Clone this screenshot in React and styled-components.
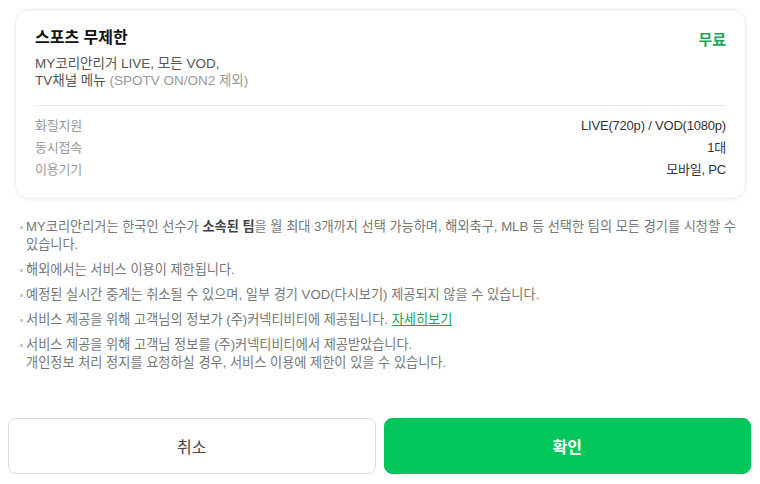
import React from "react";
import styled, { createGlobalStyle } from "styled-components";

const GlobalStyle = createGlobalStyle`
  * { box-sizing: border-box; }
  body {
    margin: 0;
    background: #fff;
    font-family: "Liberation Sans", "Noto Sans CJK KR", sans-serif;
    color: #333;
  }
`;

const Page = styled.div`
  width: 760px;
  height: 484px;
  padding: 9px 8px 0 8px;
  display: flex;
  flex-direction: column;
`;

const Card = styled.div`
  margin: 0 6px 0 7px;
  padding: 17px 19px 16px 19px;
  border: 1px solid #eeeeee;
  border-radius: 14px;
  box-shadow: 0 1px 4px rgba(0, 0, 0, 0.05);
  height: 190px;
`;

const Head = styled.div`
  display: flex;
  justify-content: space-between;
  align-items: center;
`;

const Title = styled.h2`
  margin: 0;
  font-size: 16px;
  font-weight: 700;
  color: #111;
  line-height: 22px;
`;

const Price = styled.span`
  font-size: 15px;
  font-weight: 700;
  color: #1ba65a;
`;

const Desc = styled.p`
  margin: 6px 0 0;
  font-size: 13.5px;
  line-height: 17px;
  color: #555;
`;

const Muted = styled.span`
  color: #999;
`;

const Divider = styled.hr`
  margin: 16px 0 9px;
  border: none;
  border-top: 1px solid #ebebeb;
`;

const Row = styled.div`
  display: flex;
  justify-content: space-between;
  font-size: 13px;
  line-height: 22px;
  letter-spacing: -0.2px;
`;

const Label = styled.span`
  color: #999;
`;

const Value = styled.span`
  color: #333;
`;

const Notes = styled.ul`
  list-style: none;
  margin: 19px 0 0;
  padding: 0 2px 0 18px;
  display: flex;
  flex-direction: column;
  gap: 7px;
`;

const Note = styled.li`
  position: relative;
  font-size: 13.2px;
  line-height: 18px;
  color: #777;
  &::before {
    content: "";
    position: absolute;
    left: -6px;
    top: 8px;
    width: 3px;
    height: 3px;
    background: #ccc;
  }
`;

const Strong = styled.b`
  color: #444;
  font-weight: 700;
`;

const Link = styled.a`
  color: #1ba65a;
  text-decoration: underline;
`;

const Buttons = styled.div`
  margin-top: auto;
  margin-bottom: 10px;
  display: flex;
  gap: 8px;
  padding-right: 1px;
`;

const Button = styled.button`
  flex: 1;
  height: 56px;
  border-radius: 8px;
  font-family: inherit;
  font-size: 16px;
  cursor: pointer;
  border: 1px solid ${(p) => (p.$primary ? "#03c75a" : "#dddddd")};
  background: ${(p) => (p.$primary ? "#03c75a" : "#fff")};
  color: ${(p) => (p.$primary ? "#fff" : "#444")};
  font-weight: ${(p) => (p.$primary ? 700 : 400)};
`;

const specs = [
  ["화질지원", "LIVE(720p) / VOD(1080p)"],
  ["동시접속", "1대"],
  ["이용기기", "모바일, PC"],
];

export default function App() {
  return (
    <>
      <GlobalStyle />
      <Page>
        <Card>
          <Head>
            <Title>스포츠 무제한</Title>
            <Price>무료</Price>
          </Head>
          <Desc>
            MY코리안리거 LIVE, 모든 VOD,
            <br />
            TV채널 메뉴 <Muted>(SPOTV ON/ON2 제외)</Muted>
          </Desc>
          <Divider />
          {specs.map(([k, v]) => (
            <Row key={k}>
              <Label>{k}</Label>
              <Value>{v}</Value>
            </Row>
          ))}
        </Card>
        <Notes>
          <Note>
            MY코리안리거는 한국인 선수가 <Strong>소속된 팀</Strong>을 월 최대 3개까지 선택 가능하며, 해외축구, MLB 등 선택한 팀의 모든 경기를 시청할 수 있습니다.
          </Note>
          <Note>해외에서는 서비스 이용이 제한됩니다.</Note>
          <Note>예정된 실시간 중계는 취소될 수 있으며, 일부 경기 VOD(다시보기) 제공되지 않을 수 있습니다.</Note>
          <Note>
            서비스 제공을 위해 고객님의 정보가 (주)커넥티비티에 제공됩니다. <Link href="#">자세히보기</Link>
          </Note>
          <Note>
            서비스 제공을 위해 고객님 정보를 (주)커넥티비티에서 제공받았습니다.
            <br />
            개인정보 처리 정지를 요청하실 경우, 서비스 이용에 제한이 있을 수 있습니다.
          </Note>
        </Notes>
        <Buttons>
          <Button>취소</Button>
          <Button $primary>확인</Button>
        </Buttons>
      </Page>
    </>
  );
}
